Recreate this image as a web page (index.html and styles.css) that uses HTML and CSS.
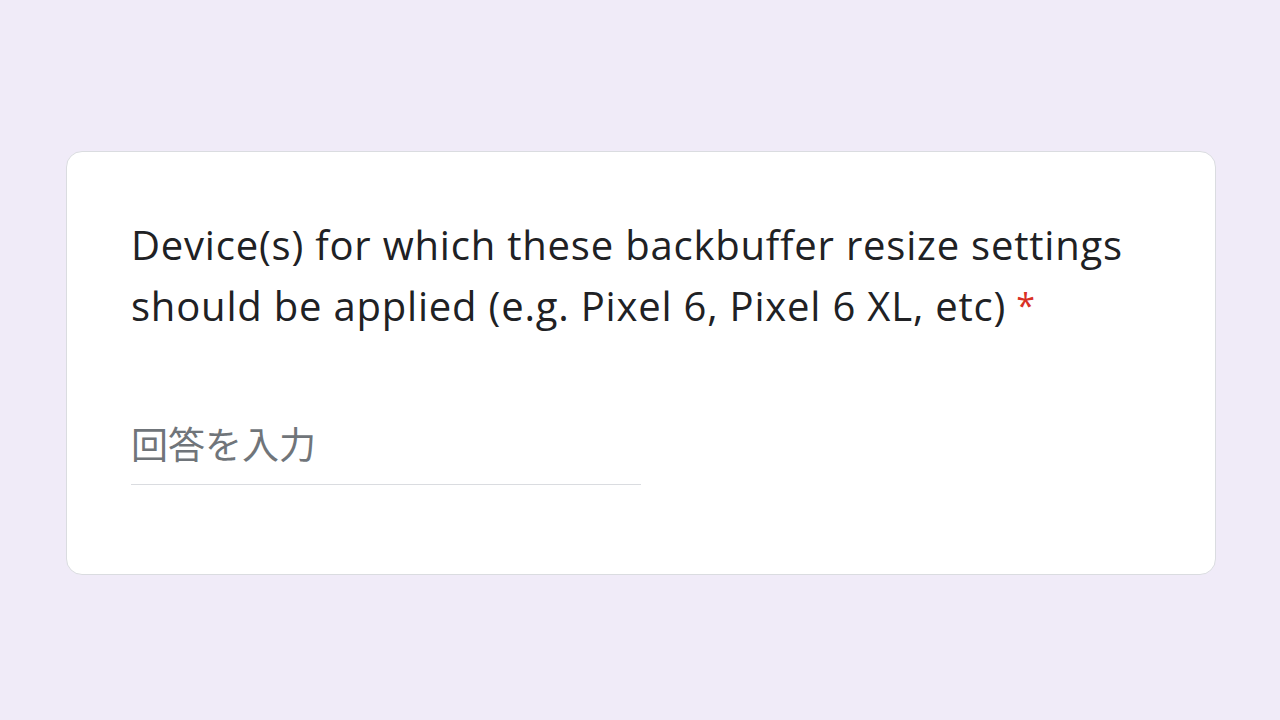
FILE: index.html
```html
<!DOCTYPE html>
<html lang="ja">
<head>
  <meta charset="UTF-8">
  <title>Question</title>
  <link rel="stylesheet" href="styles.css">
</head>
<body>

<div class="card">
  <div class="question">
    Device(s) for which these backbuffer resize settings should be applied (e.g. Pixel 6, Pixel 6 XL, etc)<span class="required">*</span>
  </div>
  <div class="answer">
    <input type="text" placeholder="回答を入力">
  </div>
</div>

</body>
</html>
```

FILE: styles.css
```css
body {
  margin: 0;
  background-color: #f0ebf8;
  font-family: "Open Sans", "Noto Sans CJK JP", sans-serif;
  color: #202124;
}

.card {
  box-sizing: border-box;
  margin: 151px 64px 0 66px;
  height: 424px;
  background: #ffffff;
  border: 1px solid #dadce0;
  border-radius: 16px;
  padding: 62px 64px 0 64px;
}

.question {
  font-size: 40px;
  line-height: 61px;
  letter-spacing: 0.8px;
  max-width: 1010px;
}

.required {
  color: #d93025;
  margin-left: 10px;
  font-size: 34px;
  line-height: 1;
  vertical-align: 3px;
}

.answer {
  margin-top: 80px;
  width: 510px;
}

.answer input {
  display: block;
  width: 100%;
  border: none;
  border-bottom: 1px solid #dadce0;
  padding: 0 0 14px 0;
  font-family: "Noto Sans CJK JP", sans-serif;
  font-size: 37px;
  color: #202124;
  outline: none;
}

.answer input::placeholder {
  color: #70757a;
}
```
